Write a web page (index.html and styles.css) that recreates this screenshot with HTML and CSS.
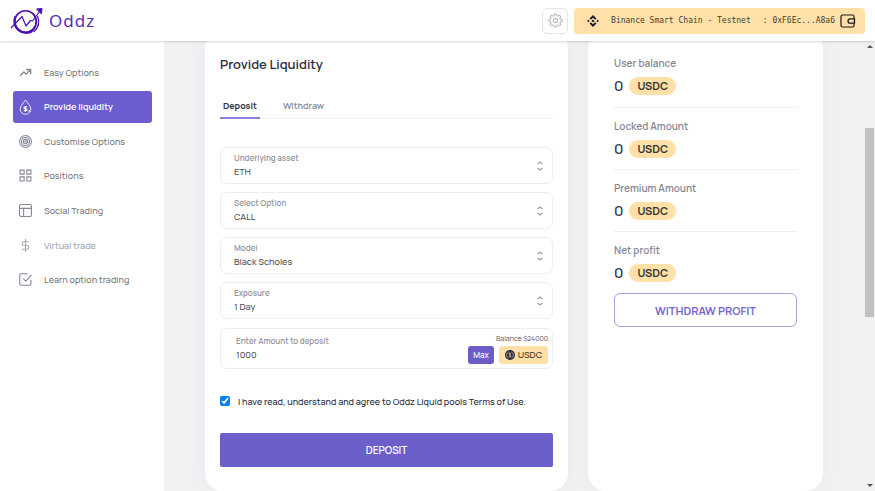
FILE: index.html
```html
<!DOCTYPE html>
<html lang="en">
<head>
  <meta charset="UTF-8" />
  <meta name="viewport" content="width=device-width, initial-scale=1.0"/>
  <title>Oddz - Provide Liquidity</title>
  <link rel="stylesheet" href="styles.css">
</head>
<body>

  <header class="topbar">
    <a class="logo" href="#">
      <svg width="34" height="28" viewBox="0 0 34 28" fill="none" stroke="#4a0fb0">
        <circle cx="15.500" cy="14.500" r="10.800" stroke-width="1.500"/>
        <path d="M5.500 9.500A11.500 11.500 0 0 0 22 24" stroke-width="2.400"/>
        <path d="M22.500 6C28 12 27 21 20 26M27.500 9C30 15 28 21 23.500 25" stroke-width="1.300"/>
        <path d="M1 21L12 9.500l4 9.500 4.500-5.500 2 .5L30 4" stroke-width="1.200" stroke-linejoin="round"/>
        <path d="M26.500 2l5.500-.5-.5 5.500z" fill="#4a0fb0"/>
      </svg>
      <span>Oddz</span>
    </a>
    <div class="topbar-right">
      <button class="settings" type="button" aria-label="Settings">
        <svg width="15" height="15" viewBox="0 0 24 24" fill="none" stroke="#b9b9c4" stroke-width="1.700" stroke-linejoin="round">
          <path d="M9.800 4.300L10.300 1.500h3.400l.5 2.800 1.700.7 2.300-1.600 2.400 2.400L19 8.100l.7 1.700 2.800.5v3.400l-2.800.5-.7 1.700 1.600 2.300-2.400 2.400-2.300-1.600-1.700.7-.5 2.800h-3.400l-.5-2.800-1.700-.7-2.300 1.600-2.400-2.400L5 15.900l-.7-1.700-2.800-.5v-3.400l2.800-.5L5 8.100 3.400 5.800l2.400-2.400L8.100 5z"/>
          <circle cx="12" cy="12" r="3.400"/>
        </svg>
      </button>
      <button class="wallet" type="button">
        <svg width="12" height="12" viewBox="0 0 24 24" fill="#1c1b33">
          <path d="M12 0l7 7-2.700 2.700L12 5.400 7.700 9.700 5 7zM12 24l7-7-2.700-2.700-4.300 4.300-4.300-4.300L5 17zM2.700 9.300L5.400 12l-2.700 2.700L0 12zM21.300 9.300L24 12l-2.700 2.700-2.700-2.700zM12 8.800l3.200 3.200-3.200 3.200L8.800 12z"/>
        </svg>
        <span class="network">Binance Smart Chain - Testnet</span>
        <span class="address">: 0xF6Ec...A8a6</span>
        <svg width="16" height="14" viewBox="0 0 16 14" fill="none" stroke="#1d1a14">
          <rect x="1" y="1" width="13" height="12" rx="1.500" stroke-width="1.200"/>
          <path d="M14.500 4.800h-4.300a2.200 2.200 0 0 0 0 4.400h4.300z" stroke-width="1.300" fill="#ffe0a8"/>
        </svg>
      </button>
    </div>
  </header>

  <div class="layout">
    <nav class="sidebar">
      <a href="#">
        <svg viewBox="0 0 24 24"><path d="M2 18l7-7 4 4 8-8M13 6.500h8.500V15" stroke-width="2.500"/></svg>
        Easy Options
      </a>
      <a href="#" class="active">
        <svg class="drop" viewBox="0 0 24 28"><path d="M12 1C9 6 2 12 2 18a10 9.500 0 0 0 20 0C22 12 15 6 12 1z" stroke-width="1.500"/><path d="M15 14.500c-1-1.500-6-1.500-6 .8s6 1.400 6 3.700-5 2.200-6 .5M12 12v11M18 23a8 8 0 0 0 1.500-3" stroke-width="2"/></svg>
        Provide liquidity
      </a>
      <a href="#">
        <svg viewBox="0 0 24 24"><circle cx="12" cy="12" r="11"/><circle cx="12" cy="12" r="7.500"/><circle cx="12" cy="12" r="4"/><circle cx="12" cy="12" r="1"/></svg>
        Customise Options
      </a>
      <a href="#">
        <svg viewBox="0 0 24 24"><path d="M2 2h7.500v7.500H2zM14.500 2H22v7.500h-7.500zM2 14.500h7.500V22H2zM14.500 14.500H22V22h-7.500z"/></svg>
        Positions
      </a>
      <a href="#">
        <svg viewBox="0 0 24 24"><rect x="1" y="1" width="22" height="22" rx="2.500"/><path d="M1 8h22M8.500 8v15"/></svg>
        Social Trading
      </a>
      <a href="#" class="muted">
        <svg viewBox="0 0 24 24"><path d="M12 0v24M18 5H9.500a3.500 3.500 0 0 0 0 7h5a3.500 3.500 0 0 1 0 7H5.500"/></svg>
        Virtual trade
      </a>
      <a href="#">
        <svg viewBox="0 0 24 24"><path d="M8 10.500l4.500 4.500L23 3.500M22 12.500V20a2 2 0 0 1-2 2.500H4A2 2 0 0 1 1.500 20V4A2 2 0 0 1 4 1.500h12"/></svg>
        Learn option trading
      </a>
    </nav>

    <main class="content">
      <form class="card pool">
        <h1>Provide Liquidity</h1>

        <div class="tabs">
          <button type="button" class="tab selected">Deposit</button>
          <button type="button" class="tab">Withdraw</button>
        </div>

        <div class="fields">
          <div class="field">
            <div class="field-text">
              <label for="asset">Underlying asset</label>
              <select id="asset"><option>ETH</option></select>
            </div>
            <svg class="chevrons" viewBox="0 0 8 10"><path d="M1.500 3L4 1l2.500 2M1.500 7L4 9l2.500-2"/></svg>
          </div>
          <div class="field">
            <div class="field-text">
              <label for="option">Select Option</label>
              <select id="option"><option>CALL</option><option>PUT</option></select>
            </div>
            <svg class="chevrons" viewBox="0 0 8 10"><path d="M1.500 3L4 1l2.500 2M1.500 7L4 9l2.500-2"/></svg>
          </div>
          <div class="field">
            <div class="field-text">
              <label for="model">Model</label>
              <select id="model"><option>Black Scholes</option></select>
            </div>
            <svg class="chevrons" viewBox="0 0 8 10"><path d="M1.500 3L4 1l2.500 2M1.500 7L4 9l2.500-2"/></svg>
          </div>
          <div class="field">
            <div class="field-text">
              <label for="exposure">Exposure</label>
              <select id="exposure"><option>1 Day</option></select>
            </div>
            <svg class="chevrons" viewBox="0 0 8 10"><path d="M1.500 3L4 1l2.500 2M1.500 7L4 9l2.500-2"/></svg>
          </div>
        </div>

        <div class="field amount">
          <div class="field-text">
            <label for="amount">Enter Amount to deposit</label>
            <input id="amount" type="text" value="1000">
          </div>
          <div class="amount-side">
            <span class="balance">Balance $24000</span>
            <div class="amount-actions">
              <button type="button" class="max">Max</button>
              <span class="token">
                <svg width="10" height="10" viewBox="0 0 20 20" fill="none" stroke="#ffe0a8">
                  <circle cx="10" cy="10" r="10" fill="#1f2142" stroke="none"/>
                  <path d="M7.500 3.500a7 7 0 0 0 0 13M12.500 3.500a7 7 0 0 1 0 13" stroke-width="1.200"/>
                  <path d="M12.500 8c-.5-2-5-2-5 0s5 2 5 4-4.500 2-5 0M10 5v10" stroke-width="1.200"/>
                </svg>
                USDC
              </span>
            </div>
          </div>
        </div>

        <div class="terms">
          <input type="checkbox" id="terms" checked>
          <label for="terms">I have read, understand and agree to Oddz Liquid pools Terms of Use.</label>
        </div>

        <button type="submit" class="deposit">DEPOSIT</button>
      </form>

      <section class="card stats">
        <div class="stat">
          <h2>User balance</h2>
          <p>0 <span class="badge">USDC</span></p>
        </div>
        <div class="stat">
          <h2>Locked Amount</h2>
          <p>0 <span class="badge">USDC</span></p>
        </div>
        <div class="stat">
          <h2>Premium Amount</h2>
          <p>0 <span class="badge">USDC</span></p>
        </div>
        <div class="stat">
          <h2>Net profit</h2>
          <p>0 <span class="badge">USDC</span></p>
        </div>
        <button type="button" class="withdraw">WITHDRAW PROFIT</button>
      </section>
    </main>

    <div class="scrollbar">
      <span class="arrow up"></span>
      <div class="track"><div class="thumb"></div></div>
      <span class="arrow down"></span>
    </div>
  </div>

</body>
</html>
```

FILE: styles.css
```css
* {
  box-sizing: border-box;
}

body {
  margin: 0;
  height: 100vh;
  display: flex;
  flex-direction: column;
  overflow: hidden;
  font-family: Manrope, Inter, 'Liberation Sans', sans-serif;
  font-size: 9px;
  color: #2c2c3a;
  background: #fff;
}

button, input, select {
  font-family: inherit;
  margin: 0;
}

button {
  cursor: pointer;
}

a {
  text-decoration: none;
}

/* top bar */
.topbar {
  position: relative;
  z-index: 1;
  display: flex;
  justify-content: space-between;
  align-items: center;
  height: 41px;
  flex: none;
  padding: 0 10px;
  background: #fff;
  box-shadow: 0 1px 2px rgba(0, 0, 0, 0.16);
}

.logo {
  display: flex;
  align-items: center;
  gap: 5px;
  font-family: 'Noto Sans', sans-serif;
  font-size: 17px;
  letter-spacing: 1px;
  color: #5a2bb5;
}

.topbar-right {
  display: flex;
  gap: 6px;
}

.settings {
  display: flex;
  align-items: center;
  justify-content: center;
  width: 26px;
  height: 26px;
  padding: 0;
  border: 1px solid #e6e6ea;
  border-radius: 5px;
  background: #fff;
}

.wallet {
  display: flex;
  align-items: center;
  height: 26px;
  padding: 0 9px 0 13px;
  border: none;
  border-radius: 4px;
  background: #ffe0a8;
  color: #4a4030;
  font-family: 'DejaVu Sans Mono', monospace;
  font-size: 8px;
}

.network {
  margin: 0 12px 0 12px;
}

.address {
  margin-right: 5px;
}

/* page */
.layout {
  flex: 1;
  display: flex;
  min-height: 0;
}

.sidebar {
  flex: none;
  display: flex;
  flex-direction: column;
  justify-content: space-between;
  width: 164px;
  height: 255px;
  padding: 15px 12px 0 13px;
}

.sidebar a {
  display: flex;
  align-items: center;
  gap: 12px;
  height: 32px;
  padding-left: 6px;
  border-radius: 3px;
  font-weight: 500;
  color: #757a80;
}

.sidebar svg {
  width: 13px;
  height: 13px;
  fill: none;
  stroke: #858898;
  stroke-width: 2;
}

.sidebar svg.drop {
  height: 16px;
}

.sidebar .active {
  background: #6b5dd0;
  color: #fff;
  font-weight: 600;
}

.sidebar .active svg {
  stroke: #fff;
}

.sidebar .muted {
  color: #a5a5b3;
}

.sidebar .muted svg {
  stroke: #a5a5b3;
}

.content {
  flex: 1;
  display: grid;
  grid-template-columns: 17fr 11fr;
  gap: 20px;
  padding: 0 41px;
  background: #f0f1f3;
}

.card {
  margin-top: -10px;
  border-radius: 18px;
  background: #fff;
  box-shadow: 0 0 20px rgba(60, 70, 100, 0.03);
}

/* deposit form */
.pool {
  padding: 24px 15px;
}

.pool h1 {
  margin: 0;
  font-size: 13px;
  line-height: 18px;
  font-weight: 600;
}

.tabs {
  display: flex;
  gap: 20px;
  margin-top: 20px;
  border-bottom: 1px solid #efeff1;
}

.tab {
  height: 26px;
  padding: 0 3px;
  border: none;
  border-bottom: 2px solid transparent;
  margin-bottom: -1px;
  background: none;
  font-size: 9px;
  font-weight: 600;
  color: #858794;
}

.tab.selected {
  border-color: #8b80dc;
  color: #33333f;
  font-weight: 700;
}

.fields {
  display: grid;
  gap: 8px;
  margin-top: 28px;
}

.field {
  display: flex;
  align-items: center;
  height: 37px;
  padding: 0 8px 0 13px;
  border: 1px solid #eeeef1;
  border-radius: 7px;
}

.field-text {
  flex: 1;
  display: flex;
  flex-direction: column;
}

.field-text label {
  font-size: 8px;
  line-height: 12px;
  font-weight: 600;
  color: #92949f;
}

.field-text select,
.field-text input {
  appearance: none;
  height: 16px;
  padding: 0;
  border: none;
  background: none;
  font-size: 9px;
  font-weight: 500;
  color: #505258;
}

.chevrons {
  width: 8px;
  height: 10px;
  fill: none;
  stroke: #9fa1ab;
  stroke-width: 1.3;
}

.amount {
  height: 41px;
  margin-top: 9px;
  padding: 0 4px 0 15px;
}

.amount-side {
  display: flex;
  flex-direction: column;
  align-items: flex-end;
  gap: 2px;
}

.balance {
  font-size: 7px;
  line-height: 10px;
  color: #55575f;
}

.amount-actions {
  display: flex;
  gap: 5px;
}

.max {
  width: 26px;
  height: 18px;
  padding: 0;
  border: none;
  border-radius: 3px;
  background: #6b5dc8;
  color: #fff;
  font-size: 8px;
  font-weight: 500;
}

.token {
  display: flex;
  align-items: center;
  justify-content: center;
  gap: 3px;
  width: 49px;
  height: 18px;
  border-radius: 3px;
  background: #ffe0a8;
  font-size: 9px;
  font-weight: 500;
  color: #3b3630;
}

.terms {
  display: flex;
  align-items: center;
  gap: 8px;
  height: 16px;
  margin-top: 24px;
}

.terms input {
  width: 10px;
  height: 10px;
  accent-color: #0a7cf5;
}

.terms label {
  font-size: 9px;
  font-weight: 500;
}

.deposit {
  display: block;
  width: 100%;
  height: 34px;
  margin-top: 24px;
  border: none;
  border-radius: 2px;
  background: #6b5fc9;
  color: #fff;
  font-size: 10px;
  font-weight: 600;
}

/* balances */
.stats {
  padding: 24px 26px;
}

.stat {
  height: 62px;
  padding-bottom: 10px;
}

.stat + .stat {
  border-top: 1px solid #efeff1;
  padding-top: 10px;
}

.stat:first-child {
  height: 52px;
}

.stat h2 {
  margin: 0;
  font-size: 10px;
  line-height: 16px;
  font-weight: 600;
  color: #858794;
}

.stat p {
  display: flex;
  align-items: center;
  gap: 6px;
  margin: 6px 0 0;
  font-size: 15px;
  line-height: 18px;
  font-weight: 500;
}

.badge {
  padding: 0 8px;
  border-radius: 9px;
  background: #ffe0a8;
  font-size: 11px;
  font-weight: 700;
  color: #3a3433;
}

.withdraw {
  display: block;
  width: 100%;
  height: 34px;
  border: 1px solid #a79fe2;
  border-radius: 6px;
  background: #fff;
  color: #7768d0;
  font-size: 11px;
  font-weight: 700;
}

/* scrollbar */
.scrollbar {
  flex: none;
  display: flex;
  flex-direction: column;
  align-items: center;
  width: 11px;
  padding: 4px 0;
  background: #f1f1f1;
}

.track {
  flex: 1;
  width: 9px;
  padding-top: 80px;
}

.thumb {
  height: 53%;
  background: #c1c1c1;
}

.arrow {
  border: 3px solid transparent;
}

.arrow.up {
  border-top: none;
  border-bottom-color: #555;
}

.arrow.down {
  border-bottom: none;
  border-top-color: #555;
}
```
